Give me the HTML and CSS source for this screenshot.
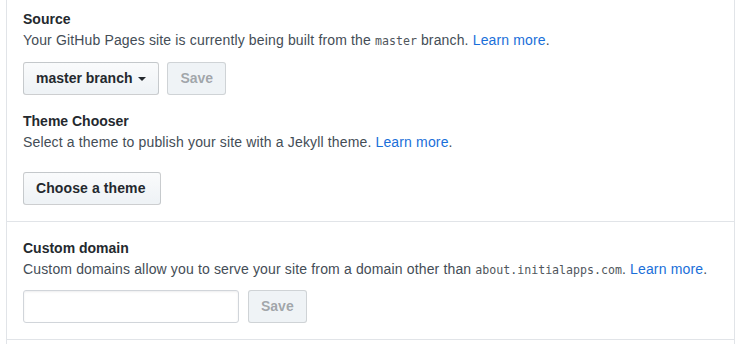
FILE: index.html
```html
<!DOCTYPE html>
<html lang="en">
<head>
    <meta charset="UTF-8">
    <title>GitHub Pages</title>
    <link rel="stylesheet" href="styles.css">
</head>
<body>
    <div class="settings-box">
        <div class="box-row box-row-first">
            <h3 class="field-title">Source</h3>
            <p class="field-note">Your GitHub Pages site is currently being built from the <code>master</code> branch. <a href="#">Learn more</a>.</p>
            <div class="form-actions">
                <button class="btn">master branch <span class="dropdown-caret"></span></button>
                <button class="btn" disabled>Save</button>
            </div>

            <h3 class="field-title theme-title">Theme Chooser</h3>
            <p class="field-note">Select a theme to publish your site with a Jekyll theme. <a href="#">Learn more</a>.</p>
            <div class="form-actions theme-actions">
                <button class="btn btn-theme">Choose a theme</button>
            </div>
        </div>

        <div class="box-row">
            <h3 class="field-title">Custom domain</h3>
            <p class="field-note">Custom domains allow you to serve your site from a domain other than <code>about.initialapps.com</code>. <a href="#">Learn more</a>.</p>
            <div class="form-actions domain-actions">
                <input class="form-control" type="text">
                <button class="btn" disabled>Save</button>
            </div>
        </div>

        <div class="box-row box-row-empty"></div>
    </div>
</body>
</html>
```

FILE: styles.css
```css
body {
    margin: 0;
    font-family: "Liberation Sans", Arial, sans-serif;
    font-size: 14px;
    line-height: 21px;
    color: #24292e;
    background: #fff;
}
.settings-box {
    margin-left: 6px;
    width: 729px;
    box-sizing: border-box;
    border-left: 1px solid #e1e4e8;
    border-right: 1px solid #e1e4e8;
}
.box-row {
    padding: 16px 16px 16px;
    border-bottom: 1px solid #e1e4e8;
}
.box-row-first {
    padding-top: 9px;
}
.box-row-empty {
    height: 4px;
    border-bottom: none;
}
.field-title {
    margin: 0;
    font-size: 14px;
    line-height: 21px;
    font-weight: bold;
    color: #24292e;
}
.theme-title {
    margin-top: 16px;
}
.field-note {
    margin: 0;
    color: #444d56;
    letter-spacing: 0.15px;
}
.field-note a {
    color: #1a6fd9;
    text-decoration: none;
}
code {
    font-family: "DejaVu Sans Mono", "Liberation Mono", monospace;
    font-size: 11.6px;
    letter-spacing: 0;
    color: #50565c;
}
.form-actions {
    display: flex;
    align-items: flex-start;
    gap: 8px;
    margin-top: 10px;
}
.theme-actions {
    margin-top: 19px;
}
.domain-actions {
    gap: 9px;
    margin-top: 9px;
}
.btn {
    font-family: inherit;
    font-size: 14px;
    font-weight: bold;
    line-height: 19px;
    padding: 6px 12px;
    color: #24292e;
    background: linear-gradient(#fafbfc, #eff3f6 90%);
    border: 1px solid rgba(27, 31, 35, 0.2);
    border-radius: 3px;
    cursor: pointer;
}
.btn-theme {
    padding: 6px 14px 6px 12px;
    letter-spacing: 0.1px;
}
.btn:disabled {
    color: rgba(36, 41, 46, 0.4);
    background: #eff3f6;
    border-color: rgba(27, 31, 35, 0.15);
    cursor: default;
}
.dropdown-caret {
    display: inline-block;
    width: 0;
    height: 0;
    margin-left: 2px;
    vertical-align: middle;
    border-top: 4px solid #24292e;
    border-left: 4px solid transparent;
    border-right: 4px solid transparent;
}
.form-control {
    width: 216px;
    height: 33px;
    box-sizing: border-box;
    padding: 6px 8px;
    font-size: 14px;
    border: 1px solid #d1d5da;
    border-radius: 3px;
    box-shadow: inset 0 1px 2px rgba(27, 31, 35, 0.075);
}
```
